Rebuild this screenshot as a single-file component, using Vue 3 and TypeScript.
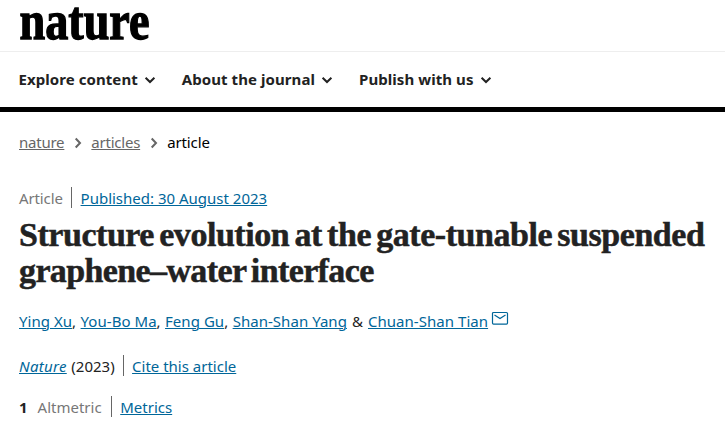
<script setup lang="ts">
const menus = ['Explore content', 'About the journal', 'Publish with us']
const authors = ['Ying Xu', 'You-Bo Ma', 'Feng Gu', 'Shan-Shan Yang']
</script>

<template>
  <div class="page">
    <header class="brand">
      <svg class="logo" width="134" height="51" viewBox="0 0 134 51" role="img" aria-label="nature">
        <text x="1.5" y="39" textLength="130" lengthAdjust="spacingAndGlyphs">nature</text>
      </svg>
    </header>
    <nav class="menu">
      <a v-for="m in menus" :key="m" class="menu-item">
        <span>{{ m }}</span>
        <svg width="12" height="8" viewBox="0 0 12 8"><path d="M1.6 1.7 6 6l4.4-4.3" /></svg>
      </a>
    </nav>
    <main>
      <div class="crumbs row">
        <a>nature</a>
        <svg width="8" height="12" viewBox="0 0 8 12"><path d="M1.7 1.5 6 6l-4.3 4.5" /></svg>
        <a>articles</a>
        <svg width="8" height="12" viewBox="0 0 8 12"><path d="M1.7 1.5 6 6l-4.3 4.5" /></svg>
        <span class="current">article</span>
      </div>
      <div class="kind row">
        <span class="muted">Article</span><i class="bar"></i><a class="link">Published: 30 August 2023</a>
      </div>
      <h1><span class="first">Structure evolution at the gate-tunable suspended</span><span class="second">graphene–water interface</span></h1>
      <div class="authors row">
        <span v-for="a in authors" :key="a" class="author"><a class="link">{{ a }}</a></span>
        <span class="amp">&amp;</span>
        <a class="link">Chuan-Shan Tian</a>
        <svg class="mail" width="18" height="14" viewBox="0 0 18 14"><rect x="1.5" y="1.5" width="15" height="11.6" rx="1" /><path d="M3.5 4 9 7.6 14.5 4" /></svg>
      </div>
      <div class="journal row">
        <a class="link title">Nature</a><span>(2023)</span><i class="bar"></i><a class="link">Cite this article</a>
      </div>
      <div class="metrics row">
        <b>1</b><span class="muted">Altmetric</span><i class="bar"></i><a class="link">Metrics</a>
      </div>
    </main>
  </div>
</template>

<style>
body { background: #fff; }
</style>

<style scoped>
.page { height: 429px; color: #222; font: 15px/24px "Noto Sans", "Open Sans", sans-serif; white-space: nowrap; }
.brand { height: 51px; padding-left: 18px; border-bottom: 1px solid #eee; }
.logo { display: block; overflow: visible; }
.logo text { font: bold 54px/1 "Liberation Serif", serif; fill: #000; stroke: #000; stroke-width: 1.3px; }
svg { flex: none; fill: none; }
.menu { display: flex; gap: 26px; height: 55px; box-sizing: border-box; padding: 15px 0 0 18.5px; }
.menu-item { display: flex; gap: 6px; font-weight: 700; letter-spacing: .07px; }
.menu-item svg { margin-top: 9px; stroke: #222; stroke-width: 2; }
main { border-top: 5px solid #000; padding: 18px 0 0 19px; }
.row { display: flex; height: 24px; }
a { text-decoration: underline; text-decoration-thickness: 1px; text-underline-offset: 1px; }
.menu-item { text-decoration: none; }
.crumbs { letter-spacing: -.23px; color: #000; }
.crumbs a { color: #666; }
.crumbs svg { margin: 7px 9px 0 10px; stroke: #666; stroke-width: 2; }
.current { letter-spacing: -.12px; }
.kind { margin-top: 32px; }
.kind .muted { letter-spacing: -.12px; }
.muted { color: #777; }
.bar { width: 1px; height: 21px; background: #666; margin: 1px 9px 0 8px; }
.kind .bar { margin-left: 7.8px; }
.link { color: #069; }
h1 { margin: 7px 0 0; font: bold 34px/36px "Liberation Serif", serif; color: #222; }
h1 span { display: block; -webkit-text-stroke: .5px #222; }
.first { letter-spacing: -.46px; word-spacing: -2.8px; }
.second { letter-spacing: -.62px; word-spacing: -2.8px; }
.authors { margin-top: 20px; letter-spacing: .04px; }
.author:not(:nth-of-type(4))::after { content: ","; }
.author { margin-right: 4.4px; }
.amp { margin: 0 5px 0 .6px; }
.mail { margin: 2px 0 0 3px; stroke: #069; stroke-width: 1.2; }
.journal { margin-top: 21px; }
.title { font-style: italic; letter-spacing: .3px; margin-right: 4.6px; }
.journal .bar { margin-right: 8.4px; }
.metrics { margin-top: 17px; }
.metrics b { margin-right: 10px; }
.metrics .bar { margin-left: 9px; margin-right: 8.6px; }
</style>
